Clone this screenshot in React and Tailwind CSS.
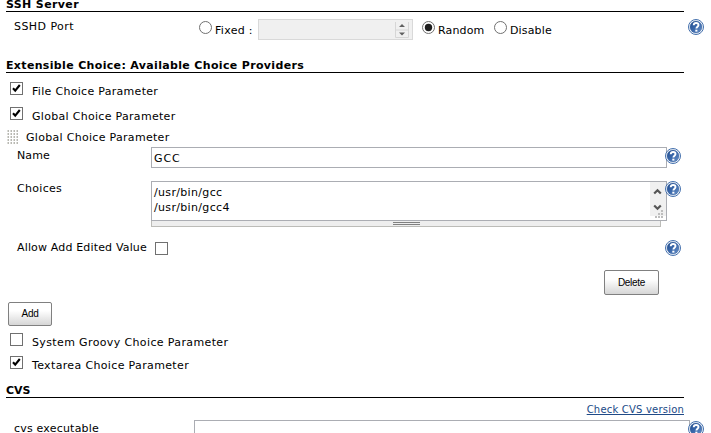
import React from "react";

function HelpIcon({ className = "" }) {
  return (
    <svg className={`block h-4 w-4 shrink-0 ${className}`} viewBox="0 0 16 16" role="img" aria-label="Help">
      <defs>
        <linearGradient id="helpFill" x1="0" y1="0" x2="1" y2="1">
          <stop offset="0" stopColor="#1f4a8c" />
          <stop offset="0.5" stopColor="#3a68ab" />
          <stop offset="1" stopColor="#6c93c8" />
        </linearGradient>
      </defs>
      <circle cx="8" cy="8" r="7.5" fill="#fff" stroke="#4470ad" />
      <circle cx="8" cy="8" r="6" fill="url(#helpFill)" stroke="#2c5796" strokeWidth="0.4" />
      <path d="M5.7 6.2C5.8 4.700 6.800 4 8.100 4c1.400 0 2.400 0.800 2.400 2 0 1.700-2.100 1.800-2.100 3.600" fill="none" stroke="#fff" strokeWidth="1.900" />
      <rect x="7.300" y="10.700" width="2.100" height="1.900" fill="#fff" />
    </svg>
  );
}

function Radio({ checked, className = "" }) {
  return (
    <svg className={`block h-[13px] w-[13px] shrink-0 ${className}`} viewBox="0 0 13 13">
      <circle cx="6.5" cy="6.5" r="6" fill="#fff" stroke="#707070" />
      {checked && <circle cx="6.5" cy="6.5" r="3.7" fill="#1e1e1e" />}
    </svg>
  );
}

function Checkbox({ checked, className = "" }) {
  return (
    <span className={`block h-[13px] w-[13px] shrink-0 border border-[#707070] bg-white ${className}`}>
      {checked && (
        <svg className="block h-[11px] w-[11px]" viewBox="0 0 11 11">
          <path d="M2 5.300L4.200 7.600L8.800 2" fill="none" stroke="#000" strokeWidth="2.100" />
        </svg>
      )}
    </span>
  );
}

function CheckRow({ checked, className, children }) {
  return (
    <div className={`flex shrink-0 pl-[10px] ${className}`}>
      <Checkbox checked={checked} />
      <span className="mt-0.5 ml-[9px]">{children}</span>
    </div>
  );
}

function Heading({ className, children }) {
  return (
    <h2 className={`ml-[6px] flex w-[678px] shrink-0 items-end border-b border-black leading-[12px] font-bold ${className}`}>
      {children}
    </h2>
  );
}

function Button({ className, children }) {
  return (
    <button className={`block shrink-0 rounded-[2px] border border-[#808080] bg-linear-to-b from-white from-35% to-[#d6d6d6] text-center font-['Liberation_Sans',sans-serif] text-[10px] leading-[22px] tracking-[-0.3px] ${className}`}>
      {children}
    </button>
  );
}

function DragHandle() {
  return (
    <svg className="block h-[14px] w-[11px] shrink-0" viewBox="0 0 11 14">
      {[0, 3, 6, 9, 12].map((y) =>
        [0, 3, 6, 9].map((x) => (
          <g key={`${x}-${y}`}>
            <rect x={x} y={y} width="2" height="2" fill="#dcdcd8" />
            <rect x={x + 1} y={y} width="1" height="2" fill="#b8b8b2" />
          </g>
        ))
      )}
    </svg>
  );
}

function Spinner() {
  return (
    <svg className="mt-0.5 mr-[3px] block h-4 w-[14px]" viewBox="0 0 14 16">
      <path d="M0.500 0V15.500H13.500V0M0 8H14" fill="none" stroke="#d6d6d6" />
      <path d="M4 5H10L7 2ZM4 10.500H10L7 13.500Z" fill="#606060" />
    </svg>
  );
}

function ScrollBar() {
  return (
    <svg className="block h-[38px] w-4" viewBox="0 0 16 38">
      <rect width="16" height="34" fill="#f0f0f0" />
      <path d="M4.200 11.500L7.500 8.200L10.800 11.500M4.200 23.500L7.500 26.800L10.800 23.500" fill="none" stroke="#555" strokeWidth="2.200" />
      <g fill="#bdbdbd">
        <rect x="11" y="28" width="2" height="2" />
        <rect x="8" y="31" width="2" height="2" />
        <rect x="11" y="31" width="2" height="2" />
        <rect x="5" y="34" width="2" height="2" />
        <rect x="8" y="34" width="2" height="2" />
        <rect x="11" y="34" width="2" height="2" />
      </g>
    </svg>
  );
}

export default function App() {
  return (
    <div className="flex h-[433px] w-[711px] flex-col overflow-hidden bg-white font-['DejaVu_Sans',Verdana,sans-serif] text-[11px] leading-[16px] tracking-[0.3px] whitespace-nowrap text-black">
      <Heading className="h-3 tracking-[0.370px]">SSH Server</Heading>
      <div className="flex h-[46px] shrink-0 items-start pt-[7px] pl-[14px]">
        <span className="w-[185px] tracking-[0.44px]">SSHD Port</span>
        <Radio className="mt-0.5" />
        <span className="mt-1 ml-[3px] w-[43px]">Fixed :</span>
        <div className="flex h-[21px] w-[155px] justify-end border border-[#d9d9d9] bg-[#f0f0f0]">
          <Spinner />
        </div>
        <Radio checked className="mt-0.5 ml-[9px]" />
        <span className="mt-1 ml-[3px] w-14 tracking-[0.15px]">Random</span>
        <Radio className="mt-0.5" />
        <span className="mt-1 ml-[3px] w-[178px] tracking-[0.15px]">Disable</span>
        <HelpIcon />
      </div>

      <Heading className="h-[15px] tracking-[0.34px]">Extensible Choice: Available Choice Providers</Heading>
      <CheckRow checked className="mt-[9px] h-[25px]">File Choice Parameter</CheckRow>
      <CheckRow checked className="h-[23px]">Global Choice Parameter</CheckRow>
      <div className="flex h-[17px] shrink-0 gap-2 pl-[7px]">
        <DragHandle />
        <span>Global Choice Parameter</span>
      </div>
      <div className="flex h-[34px] shrink-0 items-start pl-[17px]">
        <span className="mt-px w-[134px] tracking-[0.1px]">Name</span>
        <div className="h-[21px] w-[516px] border border-[#abadb3] pt-[3px] pl-0.5 tracking-[0.9px]">GCC</div>
        <HelpIcon className="mt-px -ml-0.5" />
      </div>
      <div className="flex h-[59px] shrink-0 items-start pl-[17px]">
        <span className="w-[134px]">Choices</span>
        <div className="w-[516px]">
          <div className="flex h-10 justify-between border border-[#abadb3] pl-0.5 leading-[15px] tracking-[0.33px]">
            <div className="pt-[3px]">
              <div>/usr/bin/gcc</div>
              <div>/usr/bin/gcc4</div>
            </div>
            <ScrollBar />
          </div>
          <div className="flex h-[6px] w-[510px] justify-center border-r border-b border-l border-[#bcbcb8] bg-[#eeeeee] pt-px">
            <div className="h-[3px] w-[27px] border-y border-[#808080]" />
          </div>
        </div>
        <HelpIcon className="-ml-0.5" />
      </div>
      <div className="flex h-[30px] shrink-0 items-start pl-[17px]">
        <span className="w-[138px] tracking-[0.16px]">Allow Add Edited Value</span>
        <Checkbox className="mt-0.5" />
        <HelpIcon className="ml-[497px]" />
      </div>
      <Button className="ml-[604px] h-[25px] w-[55px]">Delete</Button>
      <Button className="mt-[7px] ml-2 h-6 w-11">Add</Button>
      <CheckRow className="mt-[7px] h-[23px] tracking-[0.37px]">System Groovy Choice Parameter</CheckRow>
      <CheckRow checked className="h-[27px] tracking-[0.35px]">Textarea Choice Parameter</CheckRow>

      <Heading className="h-[15px] tracking-[0px]">CVS</Heading>
      <div className="flex h-[22px] w-[684px] shrink-0 justify-end pt-1 text-[10px] tracking-[0.2px]">
        <a className="text-[#204a87] underline">Check CVS version</a>
      </div>
      <div className="flex h-[13px] shrink-0 items-start pl-[14px]">
        <span className="mt-px w-[180px] leading-[15px] tracking-[0.2px]">cvs executable</span>
        <div className="h-[21px] w-[496px] border border-[#abadb3]" />
        <HelpIcon className="mt-px -ml-0.5" />
      </div>
    </div>
  );
}
